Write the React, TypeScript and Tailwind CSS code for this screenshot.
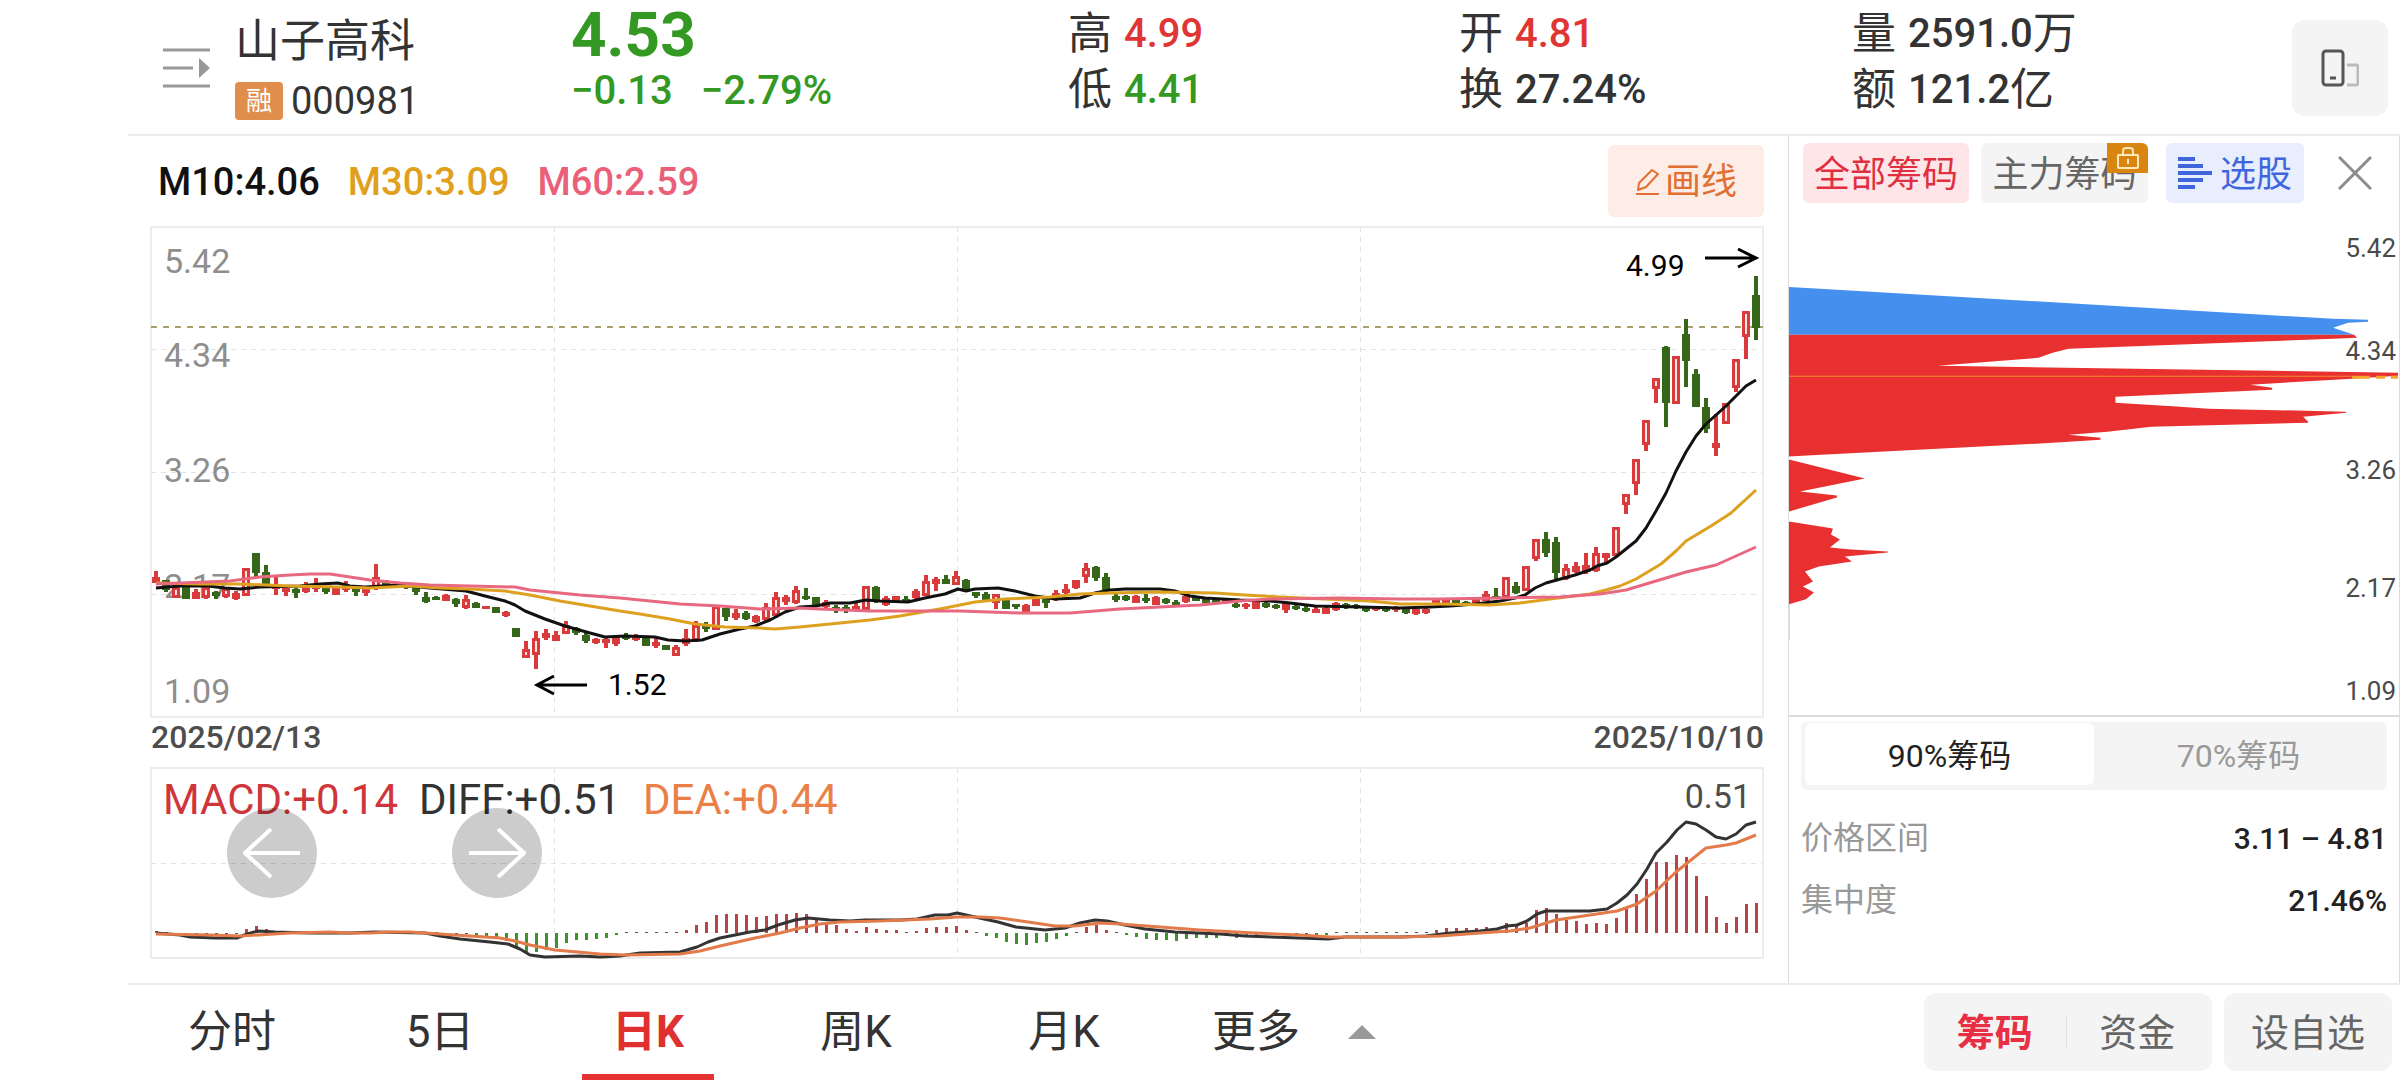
import React, { useState } from 'react';
import clsx from 'clsx';

// [rising, high, body top, body bottom, low]
type Candle = [0 | 1, number, number, number, number];

const FIRST_X = 156;
const STEP = 10;
const MACD_ZERO = 933;

const candles: Candle[] = [
  [1, 571, 577, 582, 582], [0, 580, 580, 589, 591], [1, 585, 587, 597, 597], [0, 586, 587, 598, 598], [1, 589, 592, 598, 598],
  [1, 585, 587, 597, 598], [0, 591, 592, 595, 598], [1, 588, 588, 596, 597], [1, 591, 593, 598, 599], [1, 568, 568, 595, 595],
  [0, 553, 553, 572, 576], [0, 565, 572, 583, 584], [1, 577, 585, 588, 594], [1, 587, 588, 591, 595], [0, 588, 589, 592, 597],
  [1, 582, 587, 591, 592], [1, 578, 585, 588, 591], [0, 587, 588, 591, 593], [1, 587, 588, 594, 594], [1, 581, 586, 589, 591],
  [0, 587, 588, 591, 595], [1, 587, 588, 592, 595], [1, 564, 577, 588, 589], [0, 580, 581, 585, 587], [0, 583, 584, 586, 587],
  [0, 582, 584, 587, 588], [0, 587, 588, 591, 594], [0, 592, 597, 601, 602], [0, 596, 597, 599, 599], [1, 594, 595, 600, 600],
  [0, 598, 599, 603, 606], [1, 595, 599, 607, 608], [0, 602, 603, 607, 607], [1, 606, 606, 608, 608], [0, 607, 607, 612, 612],
  [1, 611, 612, 615, 616], [0, 628, 628, 636, 636], [1, 641, 649, 657, 657], [1, 631, 638, 654, 668], [1, 629, 633, 637, 639],
  [1, 631, 635, 640, 640], [1, 621, 625, 633, 633], [0, 627, 628, 632, 634], [0, 633, 635, 640, 642], [1, 638, 639, 642, 643],
  [1, 638, 639, 642, 647], [1, 635, 636, 643, 645], [0, 633, 635, 638, 639], [1, 634, 635, 639, 640], [0, 636, 637, 645, 645],
  [1, 638, 642, 645, 647], [0, 645, 645, 649, 649], [1, 645, 647, 655, 655], [1, 629, 638, 643, 645], [1, 621, 625, 640, 641],
  [0, 622, 625, 628, 631], [1, 606, 606, 629, 629], [0, 608, 608, 616, 620], [1, 609, 613, 617, 619], [0, 611, 613, 618, 619],
  [1, 615, 616, 621, 622], [1, 603, 607, 619, 621], [1, 592, 597, 615, 617], [1, 595, 597, 601, 604], [1, 586, 590, 602, 603],
  [0, 588, 596, 598, 599], [0, 597, 597, 604, 605], [1, 600, 602, 606, 607], [0, 605, 607, 610, 612], [0, 605, 607, 610, 612],
  [1, 602, 606, 609, 610], [1, 586, 586, 609, 609], [0, 586, 587, 600, 602], [1, 596, 598, 604, 605], [1, 596, 596, 600, 601],
  [0, 596, 599, 602, 602], [1, 589, 591, 597, 600], [1, 575, 581, 595, 595], [1, 577, 579, 583, 590], [0, 575, 579, 583, 583],
  [1, 571, 576, 584, 584], [0, 579, 580, 590, 591], [0, 592, 592, 595, 597], [0, 592, 594, 600, 600], [1, 594, 594, 602, 608],
  [0, 600, 600, 608, 608], [0, 604, 604, 606, 608], [1, 604, 605, 612, 612], [1, 598, 599, 605, 605], [0, 598, 599, 602, 607],
  [1, 590, 593, 599, 600], [1, 584, 589, 592, 594], [1, 580, 580, 587, 588], [1, 563, 568, 576, 582], [0, 566, 567, 577, 580],
  [0, 573, 577, 590, 591], [0, 594, 596, 599, 601], [0, 595, 596, 599, 600], [1, 595, 596, 602, 602], [0, 594, 598, 600, 602],
  [1, 596, 597, 604, 604], [0, 598, 599, 602, 603], [0, 600, 602, 604, 604], [1, 595, 596, 601, 602], [0, 597, 597, 600, 600],
  [0, 598, 599, 602, 603], [0, 599, 600, 602, 603], [1, 599, 600, 602, 603], [0, 602, 604, 606, 607], [1, 603, 604, 606, 608],
  [1, 602, 602, 608, 608], [0, 602, 603, 606, 607], [0, 604, 605, 607, 608], [1, 603, 603, 609, 612], [0, 604, 606, 608, 609],
  [0, 606, 608, 610, 611], [1, 607, 609, 612, 612], [1, 606, 608, 613, 613], [1, 602, 603, 609, 610], [0, 603, 604, 606, 608],
  [0, 604, 605, 607, 608], [0, 606, 607, 610, 611], [1, 606, 607, 609, 610], [0, 606, 608, 610, 611], [1, 606, 607, 609, 611],
  [0, 607, 608, 612, 613], [1, 609, 609, 613, 614], [1, 608, 609, 612, 613], [1, 600, 600, 603, 603], [1, 600, 600, 603, 603],
  [0, 598, 600, 603, 604], [0, 601, 602, 604, 604], [1, 598, 599, 603, 603], [1, 591, 594, 600, 600], [0, 588, 596, 597, 597],
  [1, 577, 577, 597, 597], [0, 582, 586, 592, 593], [1, 566, 566, 590, 590], [1, 539, 539, 558, 560], [0, 532, 539, 552, 556],
  [0, 537, 542, 572, 578], [1, 564, 568, 578, 579], [1, 562, 566, 571, 572], [1, 553, 565, 571, 573], [1, 547, 553, 570, 571],
  [1, 553, 553, 557, 561], [1, 527, 527, 555, 555], [1, 494, 494, 504, 513], [1, 459, 459, 483, 494], [1, 420, 420, 444, 450],
  [1, 378, 378, 388, 402], [0, 346, 347, 402, 426], [1, 356, 356, 403, 403], [0, 319, 334, 360, 386], [0, 369, 374, 406, 406],
  [0, 398, 407, 428, 432], [1, 414, 443, 447, 455], [1, 403, 403, 423, 423], [1, 359, 359, 387, 391], [1, 311, 311, 336, 358],
  [0, 276, 295, 327, 339],
];

const macdBars = [
  2, 1, -1, -1, -1, -1, -1, -1, -1, 4, 7, 4, 2, 1, 1, 1, 1, 1, 1, 1, 1, 1, 1, 1, 1, 1, 1, 1, 1, -1, -1, -1,
  -2, -4, -6, -8, -14, -20, -19, -17, -15, -10, -7, -7, -6, -5, -2, 1, 1, 1, 1, 1, 1, 3, 8, 11, 18, 19, 19, 18,
  16, 17, 19, 19, 20, 19, 13, 10, 8, 4, 2, 6, 4, 3, 3, 1, 2, 5, 6, 6, 7, 3, 1, -3, -5, -9, -11, -12, -10, -9,
  -6, -3, 1, 6, 8, 3, 1, -2, -4, -6, -7, -7, -8, -6, -5, -5, -5, -3, -5, -4, -4, -2, -2, -2, -1, -1, -2, -2, 1, 1,
  1, 1, 1, 1, 1, 1, 1, 1, 3, 5, 5, 5, 5, 6, 3, 10, 7, 10, 23, 25, 19, 13, 12, 9, 10, 9, 15, 24, 39, 54,
  71, 71, 78, 76, 57, 37, 16, 10, 16, 29, 30,
];

const ma10 =
  '156,588 180,586 208,586 225,588 240,589 260,587 300,586 320,584 338,583 350,586 365,587 398,585 430,588 466,591 485,596 505,601 515,605 525,611 545,619 565,626 590,633 605,637 625,636 655,637 668,640 685,641 702,640 720,634 740,629 755,626 770,620 785,612 800,607 816,606 830,603 850,603 866,600 880,601 908,602 925,598 945,594 958,589 966,591 975,589 998,588 1015,591 1035,596 1055,599 1080,598 1095,593 1110,590 1125,589 1160,589 1175,591 1190,596 1205,598 1240,600 1270,601 1290,603 1315,606 1360,607 1400,608 1430,607 1450,606 1475,604 1500,601 1515,598 1525,595 1535,588 1546,583 1575,575 1590,570 1597,566 1607,563 1616,557 1636,541 1646,528 1656,511 1666,493 1676,471 1686,452 1696,436 1706,424 1716,415 1726,406 1736,396 1746,386 1756,380';
const ma30 =
  '156,583 200,584 240,584 290,586 340,587 370,588 410,586 440,588 470,589 505,591 530,595 560,601 590,606 620,611 640,614 670,619 695,624 725,627 760,628 775,629 800,627 840,623 870,620 900,616 945,608 975,602 1005,599 1050,597 1080,594 1110,593 1160,592 1215,593 1245,595 1280,597 1370,601 1400,604 1440,604 1490,605 1520,603 1550,599 1590,594 1606,590 1620,586 1636,579 1661,564 1676,551 1686,541 1711,526 1731,513 1756,490';
const ma60 =
  '156,584 230,581 260,577 290,575 310,574 330,574 350,577 370,580 400,583 430,585 515,587 530,590 580,595 620,598 680,604 720,606 760,609 800,608 820,609 870,611 960,611 1020,613 1070,613 1120,609 1160,607 1200,605 1240,601 1270,599 1340,598 1400,599 1440,599 1500,598 1560,597 1600,594 1626,590 1656,581 1686,572 1716,565 1756,547';
const diffLine =
  '156,933 180,935 190,937 215,938 237,938 247,934 258,931 275,932 310,933 350,933 375,932 425,933 440,936 460,939 490,942 508,944 520,949 530,955 545,957 580,956 600,957 620,956 640,953 680,952 697,947 708,942 720,938 735,935 750,932 765,930 778,925 795,920 808,918 830,920 850,921 865,920 900,920 917,919 935,915 948,915 957,913 975,917 998,922 1016,927 1045,930 1065,928 1080,923 1095,920 1107,921 1125,925 1145,929 1175,932 1220,934 1245,936 1300,938 1328,939 1345,937 1400,937 1426,936 1450,933 1480,931 1497,929 1507,926 1517,925 1527,921 1537,914 1546,911 1590,911 1607,909 1617,903 1627,895 1637,884 1647,869 1656,853 1667,842 1677,830 1686,822 1696,824 1706,830 1716,837 1726,839 1736,834 1746,825 1756,822';
const deaLine =
  '156,934 210,935 240,936 290,933 330,932 350,933 370,933 390,932 410,932 440,934 470,936 500,938 515,941 530,945 555,950 600,954 625,955 680,954 700,951 720,946 755,938 780,933 800,928 820,924 840,922 880,921 930,919 957,917 980,917 1000,918 1035,923 1055,926 1075,926 1100,923 1120,924 1160,927 1200,930 1255,933 1300,935 1330,937 1400,937 1440,936 1480,933 1510,931 1530,928 1556,920 1590,915 1617,911 1637,904 1656,891 1676,872 1696,856 1706,848 1726,845 1736,843 1756,835';

const chipsAbove = '1789,287 1807,288 2334,319 2369,320 2369,322 2349,323 2334,328 2355,335 1789,335';
const chipsBelow = [
  '1789,335 2355,335 2358,338 2334,339 2069,349 2053,353 2039,358 1938,366 2005,367 2399,373 2399,376 2353,379 2251,385 2273,388 2273,390 2116,397 2116,403 2181,407 2209,409 2347,412 2347,413 2304,417 2309,422 2309,423 2152,427 2108,432 2069,435 2101,438 2101,440 2057,443 1807,456 1789,457',
  '1789,460 1865,479 1800,492 1837,496 1837,498 1789,512',
  '1789,522 1833,529 1831,535 1840,540 1830,548 1851,550 1888,552 1888,553 1845,557 1852,562 1819,567 1805,572 1813,582 1803,587 1814,593 1806,600 1789,605',
];

const quotes = [
  [
    { label: '高', value: '4.99', color: 'text-[#e03535]' },
    { label: '低', value: '4.41', color: 'text-[#349922]' },
  ],
  [
    { label: '开', value: '4.81', color: 'text-[#e03535]' },
    { label: '换', value: '27.24%', color: 'text-[#333333]' },
  ],
  [
    { label: '量', value: '2591.0', unit: '万', color: 'text-[#333333]' },
    { label: '额', value: '121.2', unit: '亿', color: 'text-[#333333]' },
  ],
];

const periods = ['分时', '5日', '日K', '周K', '月K'];

const MenuIcon = () => (
  <svg width="48" height="40" viewBox="0 0 48 40" fill="none" stroke="#999999" strokeWidth="3">
    <path d="M0 2h47M0 20h30M0 38h47" />
    <path d="M36 10v20l11-10z" fill="#999999" stroke="none" />
  </svg>
);

const RotateIcon = () => (
  <svg width="38" height="38" viewBox="0 0 38 38" fill="none">
    <rect x="2" y="2" width="20" height="34" rx="3" stroke="#555555" strokeWidth="3" />
    <path d="M9 29h6" stroke="#555555" strokeWidth="3" />
    <path d="M26 16h9a2 2 0 0 1 2 2v16a2 2 0 0 1-2 2h-9" stroke="#bbbbbb" strokeWidth="3" />
  </svg>
);

const PencilIcon = () => (
  <svg width="26" height="30" viewBox="0 0 26 30" fill="none" stroke="#e07033" strokeWidth="2">
    <path d="M3 23l1-7L17 3l6 4L11 20z" strokeLinejoin="round" />
    <path d="M1 27h23" />
  </svg>
);

const LockIcon = () => (
  <svg width="24" height="24" viewBox="0 0 24 24" fill="none" stroke="#ffe9b8" strokeWidth="2">
    <rect x="2" y="9" width="20" height="13" rx="1" />
    <path d="M7 9V5a3 3 0 0 1 3-3h4a3 3 0 0 1 3 3v4M12 13v5" />
  </svg>
);

const BarsIcon = () => (
  <svg width="34" height="32" viewBox="0 0 34 32" stroke="#3f66dc" strokeWidth="4">
    <path d="M0 2h17M0 9h25M0 16h34M0 23h25M0 30h17" />
  </svg>
);

const ArrowIcon = ({ flip }: { flip?: boolean }) => (
  <svg width="58" height="50" viewBox="0 0 58 50" fill="none" stroke="#ffffff" strokeWidth="4" className={clsx(flip && 'rotate-180')}>
    <path d="M57 25H2M28 1L2 25l26 24" />
  </svg>
);

const KLineChart = () => (
  <svg viewBox="150 226 1614 492" className="block h-auto w-full" role="img" aria-label="日K线图">
    <g fill="none" stroke="#e2e2e2" strokeWidth="1" strokeDasharray="5 5">
      <path d="M151 349.5H1763M151 472.5H1763M151 594.5H1763" />
      <path d="M554.5 227V717M957.5 227V717M1360.5 227V717" />
    </g>
    <rect x="151" y="227" width="1612" height="490" fill="none" stroke="#ececec" strokeWidth="2" />
    <g fontSize="34" fill="#8e8e8e">
      <text x="164" y="273">5.42</text>
      <text x="164" y="367">4.34</text>
      <text x="164" y="482">3.26</text>
      <text x="164" y="598">2.17</text>
      <text x="164" y="703">1.09</text>
    </g>
    <path d="M151 327H1763" stroke="#a9a06c" strokeWidth="2" strokeDasharray="6 6" />
    {candles.map(([up, high, top, bottom, low], i) => {
      const x = FIRST_X + i * STEP;
      const color = up ? '#d93b3d' : '#35661a';
      return (
        <g key={i} fill={color}>
          <rect x={x - 2} y={high} width="4" height={low - high + 1} />
          <rect x={x - 4} y={top} width="8" height={bottom - top + 1} />
          {up === 1 && bottom - top > 7 && <rect x={x - 1} y={top + 3} width="2" height={bottom - top - 5} fill="#ffe4e0" />}
        </g>
      );
    })}
    <g fill="none" strokeWidth="3" strokeLinejoin="round">
      <polyline points={ma10} stroke="#111111" />
      <polyline points={ma30} stroke="#dda01f" />
      <polyline points={ma60} stroke="#e86880" />
    </g>
    <g fill="none" stroke="#000000" strokeWidth="3">
      <path d="M1705 258h50M1738 249l18 9-18 9" />
      <path d="M587 685h-50M554 676l-17 9 17 9" />
    </g>
    <g fontSize="30" fill="#000000">
      <text x="1626" y="276">4.99</text>
      <text x="608" y="695">1.52</text>
    </g>
  </svg>
);

const MacdChart = () => (
  <svg viewBox="150 767 1614 192" className="block h-auto w-full" role="img" aria-label="MACD">
    <g fill="none" stroke="#e2e2e2" strokeWidth="1" strokeDasharray="5 5">
      <path d="M151 863.5H1763" />
      <path d="M554.5 768V958M957.5 768V958M1360.5 768V958" />
    </g>
    <rect x="151" y="768" width="1612" height="190" fill="none" stroke="#ececec" strokeWidth="2" />
    {macdBars.map((v, i) => (
      <rect
        key={i}
        x={FIRST_X + i * STEP - 1}
        y={v > 0 ? MACD_ZERO - v : MACD_ZERO}
        width="3"
        height={Math.abs(v)}
        fill={Math.abs(v) < 2 ? '#555555' : v > 0 ? '#bb4346' : '#3f9130'}
      />
    ))}
    <g fill="none" strokeWidth="3" strokeLinejoin="round">
      <polyline points={diffLine} stroke="#333333" />
      <polyline points={deaLine} stroke="#e27a4a" />
    </g>
    <g fontSize="42">
      <text x="163" y="814" fill="#cf363b">MACD:+0.14</text>
      <text x="419" y="814" fill="#333333">DIFF:+0.51</text>
      <text x="643" y="814" fill="#ea7f48">DEA:+0.44</text>
    </g>
    <text x="1751" y="808" fontSize="34" fill="#4d4d4d" textAnchor="end">0.51</text>
  </svg>
);

const ChipChart = () => (
  <svg viewBox="1789 217 611 499" className="block h-auto w-full" role="img" aria-label="筹码分布">
    <polygon points={chipsAbove} fill="#4590ee" />
    {chipsBelow.map((points) => (
      <polygon key={points} points={points} fill="#e93030" />
    ))}
    <path d="M1789 605v35" stroke="#eda0a0" strokeWidth="1" />
    <path d="M1789 376.5H2353" stroke="#f08a2c" strokeWidth="1" />
    <path d="M2353 377.5H2399" stroke="#f5a52a" strokeWidth="3" strokeDasharray="18 6 9 6" />
    <g fontSize="26" fill="#4a4a4a" textAnchor="end">
      <text x="2397" y="257">5.42</text>
      <text x="2397" y="360">4.34</text>
      <text x="2397" y="479">3.26</text>
      <text x="2397" y="598">2.17</text>
      <text x="2397" y="701">1.09</text>
    </g>
  </svg>
);

const Header = () => (
  <header className="grid h-[136px] grid-cols-[443fr_497fr_391fr_393fr_548fr] border-b-2 border-[#ececec] text-[#333333]">
    <div className="flex gap-6 pl-[35px]">
      <button type="button" aria-label="菜单" className="flex items-center">
        <MenuIcon />
      </button>
      <div className="pt-[17px]">
        <h1 className="text-[45px] leading-[50px]">山子高科</h1>
        <div className="flex h-[68px] items-center gap-2">
          <span className="flex h-[38px] w-12 items-center justify-center rounded bg-[#e08e4c] text-[26px] text-white">融</span>
          <span className="text-[38px] leading-[40px]">000981</span>
        </div>
      </div>
    </div>
    <div className="pt-1 text-[#349922]">
      <div className="text-[62px] leading-[62px] font-bold">4.53</div>
      <div className="flex gap-7 text-[40px] leading-[50px] font-medium">
        <span>−0.13</span>
        <span>−2.79%</span>
      </div>
    </div>
    {quotes.map((rows, i) => (
      <div key={i} className="flex items-center justify-between pr-3">
        <dl className="self-start pt-1.5">
          {rows.map((q) => (
            <div key={q.label} className="flex items-center gap-3 leading-[56px]">
              <dt className="text-[44px]">{q.label}</dt>
              <dd className={clsx('flex items-center text-[40px] font-medium', q.color)}>
                {q.value}
                {q.unit && <span className="text-[44px] font-normal">{q.unit}</span>}
              </dd>
            </div>
          ))}
        </dl>
        {i === quotes.length - 1 && (
          <button type="button" aria-label="竖屏" className="flex h-24 w-24 items-center justify-center rounded-xl bg-[#f4f4f4]">
            <RotateIcon />
          </button>
        )}
      </div>
    ))}
  </header>
);

const ChartColumn = () => (
  <section className="min-w-0 flex-1 pr-6 pl-[22px]">
    <div className="flex h-[90px] items-center gap-7 pl-2 text-[38px] font-medium">
      <span className="pt-0.5 text-[#111111]">M10:4.06</span>
      <span className="pt-0.5 text-[#e0a01c]">M30:3.09</span>
      <span className="pt-0.5 text-[#ea6078]">M60:2.59</span>
      <button type="button" className="ml-auto flex h-[72px] w-[156px] items-center justify-center gap-1 rounded-md bg-[#feede7] pt-0.5 text-[36px] font-normal text-[#e07033]">
        <PencilIcon />
        画线
      </button>
    </div>
    <KLineChart />
    <div className="flex h-[49px] justify-between pl-px text-[32px] leading-[38px] font-medium text-[#4d4d4d]">
      <time>2025/02/13</time>
      <time>2025/10/10</time>
    </div>
    <div className="relative">
      <MacdChart />
      <div className="absolute top-[41px] left-[77px] flex gap-[135px]">
        <button type="button" aria-label="向左" className="flex h-[90px] w-[90px] items-center justify-center rounded-full bg-black/20">
          <ArrowIcon />
        </button>
        <button type="button" aria-label="向右" className="flex h-[90px] w-[90px] items-center justify-center rounded-full bg-black/20">
          <ArrowIcon flip />
        </button>
      </div>
    </div>
  </section>
);

const ChipPanel = () => {
  const [range, setRange] = useState('90%');

  return (
    <aside className="w-[612px] shrink-0 border-x border-[#dcdcdc]">
      <div className="flex h-[81px] items-start pt-[7px] pl-[14px] text-[36px]">
        <button type="button" className="h-[60px] w-[166px] rounded-md bg-[#fee6e8] pt-1 text-[#e02f41]">全部筹码</button>
        <button type="button" className="relative ml-3 h-[60px] w-[167px] rounded-md bg-[#f4f4f4] pt-1 text-[#666666]">
          主力筹码
          <span className="absolute top-0 right-0 flex h-[30px] w-[41px] items-center justify-center rounded-tr-md bg-[#d8860f]">
            <LockIcon />
          </span>
        </button>
        <button type="button" className="ml-[18px] flex h-[60px] w-[138px] items-center justify-center gap-2 rounded-md bg-[#e8eefd] text-[#3f66dc]">
          <BarsIcon />
          <span className="pt-1">选股</span>
        </button>
        <button type="button" aria-label="关闭" className="ml-[34px] flex h-[60px] items-center">
          <svg width="34" height="34" viewBox="0 0 34 34" stroke="#8c8c8c" strokeWidth="3">
            <path d="M1 1l32 32M33 1L1 33" />
          </svg>
        </button>
      </div>
      <ChipChart />
      <div className="border-t-2 border-[#dcdcdc] px-3 pt-[5px]">
        <div className="grid grid-cols-2 rounded-md bg-[#f4f4f4] px-1 pt-px pb-[5px] text-[32px]">
          {['90%', '70%'].map((r) => (
            <button
              key={r}
              type="button"
              onClick={() => setRange(r)}
              className={clsx('h-[62px] rounded-md pt-1', range === r ? 'bg-white text-[#222222]' : 'text-[#999999]')}
            >
              {r}筹码
            </button>
          ))}
        </div>
        <dl className="pt-[17px] text-[32px] text-[#999999]">
          <div className="flex h-[62px] items-center justify-between">
            <dt>价格区间</dt>
            <dd className="text-[30px] font-medium text-[#222222]">3.11 – 4.81</dd>
          </div>
          <div className="flex h-[62px] items-center justify-between">
            <dt>集中度</dt>
            <dd className="text-[30px] font-medium text-[#222222]">21.46%</dd>
          </div>
        </dl>
      </div>
    </aside>
  );
};

const Footer = () => {
  const [period, setPeriod] = useState('日K');

  return (
    <footer className="flex h-[97px] items-stretch border-t-2 border-[#ececec] text-[44px] text-[#333333]">
      {periods.map((p) => (
        <button
          key={p}
          type="button"
          onClick={() => setPeriod(p)}
          className={clsx('flex w-[208px] flex-col items-center', period === p && 'font-bold text-[#e03030]')}
        >
          <span className="flex flex-1 items-center pt-1">{p}</span>
          <span className={clsx('h-[6px] w-[132px]', period === p && 'bg-[#e63232]')} />
        </button>
      ))}
      <button type="button" className="flex items-center gap-12 pb-0.5 pl-11">
        更多
        <svg width="28" height="14" viewBox="0 0 28 14">
          <path d="M0 14L14 0l14 14z" fill="#999999" />
        </svg>
      </button>
      <div className="ml-auto flex gap-3 pt-2 pr-2 text-[38px] text-[#666666]">
        <div className="flex h-[78px] w-[288px] items-center rounded-xl bg-[#f4f4f4]">
          <button type="button" className="flex-1 pt-0.5 font-bold text-[#e82f44]">筹码</button>
          <span className="h-[34px] w-px bg-[#e2e2e2]" />
          <button type="button" className="flex-1 pt-0.5 pr-1">资金</button>
        </div>
        <button type="button" className="h-[78px] w-[168px] rounded-xl bg-[#f4f4f4] pt-0.5">设自选</button>
      </div>
    </footer>
  );
};

export default function App() {
  return (
    <div className="flex min-h-screen flex-col bg-white pl-32 font-[Roboto,'Noto_Sans_CJK_SC',sans-serif]">
      <Header />
      <main className="flex flex-1">
        <ChartColumn />
        <ChipPanel />
      </main>
      <Footer />
    </div>
  );
}
